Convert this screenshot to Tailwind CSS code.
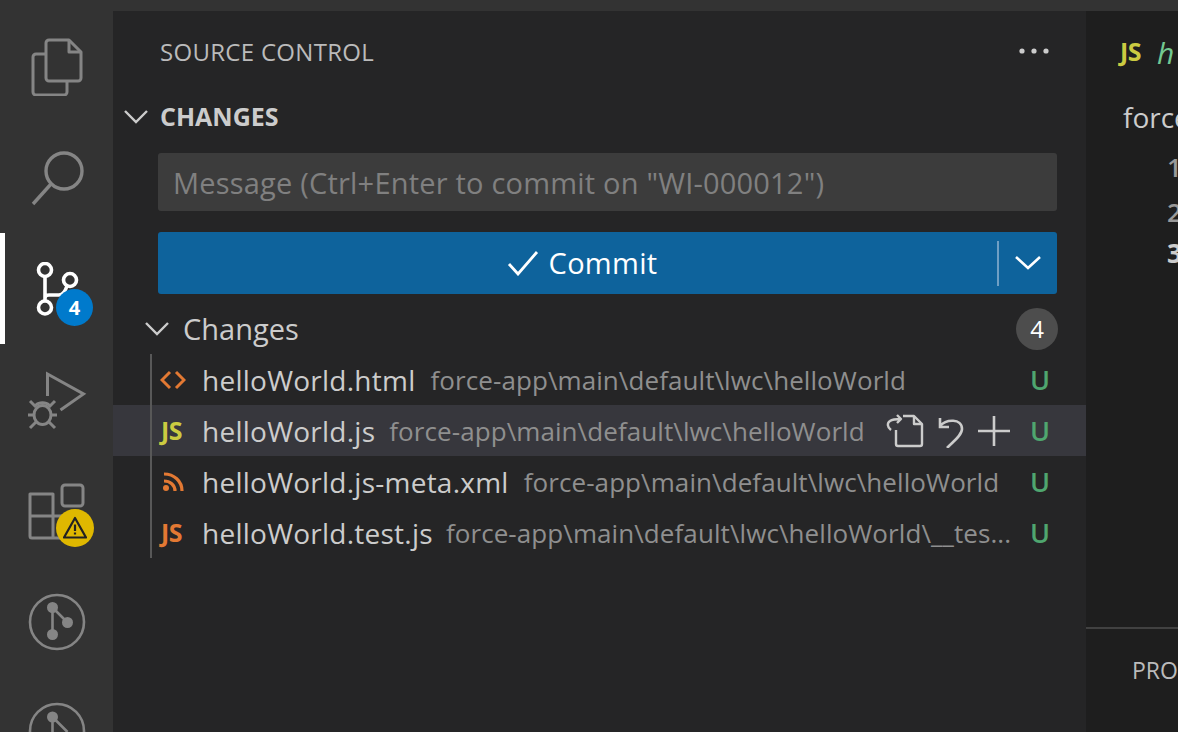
<!doctype html>
<html>
  <head>
    <meta charset="UTF-8" />
    <script src="https://cdn.jsdelivr.net/npm/@tailwindcss/browser@4"></script>
  </head>
  <body class="w-[1178px] h-[732px] overflow-hidden bg-[#333333] font-['Open_Sans',sans-serif]">
    <div class="h-[11px] bg-[#333333]"></div>
    <div class="flex h-[721px]">

      <!-- activity bar -->
      <div class="w-[113px] shrink-0 bg-[#333333] overflow-hidden flex flex-col">
        <div class="h-[111px] shrink-0 flex items-center justify-center">
          <svg class="w-[52px] h-[58px]" viewBox="0 0 52 58" fill="none" stroke="#858585" stroke-width="3" stroke-linejoin="round">
            <path d="M18 2h20l12 12v26a3 3 0 0 1-3 3H18a3 3 0 0 1-3-3V5a3 3 0 0 1 3-3z" />
            <path d="M38 2v12h12" />
            <path d="M15 16H5a3 3 0 0 0-3 3v35a3 3 0 0 0 3 3h28a3 3 0 0 0 3-3V43" />
          </svg>
        </div>
        <div class="h-[111px] shrink-0 flex items-center justify-center">
          <svg class="w-[56px] h-[58px]" viewBox="0 0 56 58" fill="none" stroke="#858585" stroke-width="3.4">
            <circle cx="35" cy="22" r="18" />
            <path d="M22 35L4 55" />
          </svg>
        </div>
        <div class="h-[111px] shrink-0 flex items-center justify-center border-l-[5px] border-white pr-[5px] relative">
          <svg class="w-[44px] h-[54px]" viewBox="0 0 44 54" fill="none" stroke="#ffffff" stroke-width="3.6">
            <circle cx="10" cy="8" r="6.5" />
            <circle cx="10" cy="45.5" r="6.5" />
            <circle cx="35" cy="18" r="6.5" />
            <path d="M10 14.500v24.500M10 36c0-2 2-3 4-3h10c3 0 6-3 8-9" />
          </svg>
          <span class="absolute left-[51px] top-[56px] w-[37px] h-[37px] rounded-full bg-[#007acc] text-white text-[20px] font-bold flex items-center justify-center">4</span>
        </div>
        <div class="h-[111px] shrink-0 flex items-center justify-center">
          <svg class="w-[60px] h-[60px]" viewBox="0 0 60 60" fill="none" stroke="#858585" stroke-width="3" stroke-linejoin="miter">
            <path d="M20.500 26V4L56.500 24L33.500 40" />
            <ellipse cx="15.500" cy="45" rx="8.500" ry="9.500" />
            <path d="M9 35c3-3 10-3 13 0M3 31l6 6M28 31l-6 6M1 45h6M24 45h6M3 58l6-6M28 58l-6-6" />
          </svg>
        </div>
        <div class="h-[111px] shrink-0 flex items-center justify-center relative">
          <svg class="w-[60px] h-[60px] mt-[2px]" viewBox="0 0 60 60" fill="none" stroke="#858585" stroke-width="3" stroke-linejoin="round">
            <rect x="35" y="3" width="21" height="21" rx="3" />
            <path d="M3 12h23v22h22v20a2 2 0 0 1-2 2H5a2 2 0 0 1-2-2zM3 34h23v22" />
          </svg>
          <span class="absolute left-[56px] top-[54px] w-[38px] h-[38px] rounded-full bg-[#dfb800] flex items-center justify-center">
            <svg class="w-[24px] h-[23px] -mt-[1px]" viewBox="0 0 24 23" fill="none" stroke="#222222" stroke-width="2.2" stroke-linejoin="round">
              <path d="M12 2L23 21.500H1z" />
              <path d="M12 8.500v6.500M12 16.500v2" />
            </svg>
          </span>
        </div>
        <div class="h-[111px] shrink-0 flex items-center justify-center">
          <svg class="w-[58px] h-[58px]" viewBox="0 0 58 58" fill="none" stroke="#858585" stroke-width="2.6">
            <circle cx="29" cy="29" r="27" />
            <path d="M24.500 14.500v27M24.500 14.500l15 15" />
            <circle cx="24.500" cy="14.500" r="5.500" fill="#858585" stroke="none" />
            <circle cx="24.500" cy="41.500" r="5.500" fill="#858585" stroke="none" />
            <circle cx="39.500" cy="29.500" r="5.500" fill="#858585" stroke="none" />
          </svg>
        </div>
        <div class="shrink-0 flex justify-center mt-[25px]">
          <svg class="w-[58px] h-[58px] shrink-0" viewBox="0 0 58 58" fill="none" stroke="#858585" stroke-width="2.6">
            <circle cx="29" cy="29" r="27" />
            <path d="M24.500 15v27M24.500 15l15 15" />
            <circle cx="24.500" cy="15" r="5.500" fill="#858585" stroke="none" />
          </svg>
        </div>
      </div>

      <!-- sidebar -->
      <div class="w-[973px] shrink-0 bg-[#252526] text-[#cccccc] flex flex-col">
        <div class="h-[82px] flex items-center justify-between pl-[47px] pr-[37px]">
          <span class="text-[24px] text-[#bbbbbb] tracking-[0.3px]">SOURCE CONTROL</span>
          <svg class="w-[30px] h-[6px] -mt-[2px]" viewBox="0 0 30 6" fill="#cccccc">
            <circle cx="3" cy="3" r="2.6" />
            <circle cx="15" cy="3" r="2.6" />
            <circle cx="27" cy="3" r="2.6" />
          </svg>
        </div>
        <div class="h-[48px] flex items-center pl-[11px]">
          <svg class="w-[24px] h-[14px]" viewBox="0 0 24 14" fill="none" stroke="#cccccc" stroke-width="2.4"><path d="M1 1l11 11L23 1" /></svg>
          <span class="ml-[12px] text-[25px] font-bold">CHANGES</span>
        </div>

        <div class="mx-[45px] w-[899px] h-[58px] mt-[12px] pt-[2px] bg-[#3c3c3c] rounded-[3px] flex items-center pl-[15px] text-[29px] text-[#808080] tracking-[0.2px] whitespace-nowrap">Message (Ctrl+Enter to commit on "WI-000012")</div>

        <div class="mx-[45px] w-[899px] h-[62px] mt-[21px] bg-[#0e639c] rounded-[3px] flex items-center text-white">
          <div class="flex-1 pl-[9px] flex items-center justify-center gap-[10px] text-[29px] tracking-[0.3px]">
            <svg class="w-[32px] h-[26px]" viewBox="0 0 32 26" fill="none" stroke="#ffffff" stroke-width="2.8"><path d="M2 14l9 10L30 2" /></svg>
            <span>Commit</span>
          </div>
          <div class="w-[2px] h-[45px] bg-[#6f9fc4]"></div>
          <div class="w-[58px] flex justify-center">
            <svg class="w-[26px] h-[14px]" viewBox="0 0 26 14" fill="none" stroke="#ffffff" stroke-width="2.6"><path d="M1 1l12 11L25 1" /></svg>
          </div>
        </div>

        <div class="h-[60px] pt-[10px] flex items-center pl-[32px] pr-[28px]">
          <svg class="w-[24px] h-[14px]" viewBox="0 0 24 14" fill="none" stroke="#cccccc" stroke-width="2.4"><path d="M1 1l11 11L23 1" /></svg>
          <span class="ml-[14px] flex-1 text-[29px]">Changes</span>
          <span class="w-[42px] h-[42px] rounded-full bg-[#4d4d4d] text-white text-[24px] flex items-center justify-center">4</span>
        </div>

        <div class="relative">
          <div class="absolute left-[37px] top-0 bottom-0 w-[2px] bg-[#585858]"></div>

          <div class="h-[51px] pt-[1px] flex items-center pl-[47px] pr-[36px]">
            <svg class="w-[26px] h-[20px] mr-[16px] shrink-0" viewBox="0 0 26 20" fill="none" stroke="#e37933" stroke-width="3"><path d="M10 2L2 10l8 8M16 2l8 8-8 8" /></svg>
            <span class="text-[28px] text-[#cccccc] tracking-[0.25px]">helloWorld.html</span>
            <span class="ml-[15px] flex-1 text-[26px] text-[#8f8f8f] tracking-[0.08px] whitespace-nowrap">force-app\main\default\lwc\helloWorld</span>
            <span class="text-[27px] font-semibold text-[#4fa66f]">U</span>
          </div>

          <div class="h-[51px] pt-[1px] flex items-center pl-[48px] pr-[36px] bg-[#37373d]">
            <span class="w-[25px] mr-[16px] shrink-0 text-[25px] font-bold text-[#cbcb41] tracking-[-0.5px]">JS</span>
            <span class="text-[28px] text-[#cccccc] tracking-[0.25px]">helloWorld.js</span>
            <span class="ml-[14px] flex-1 text-[26px] text-[#8f8f8f] tracking-[0.08px] whitespace-nowrap">force-app\main\default\lwc\helloWorld</span>
            <div class="flex items-center gap-[14px] mr-[20px]">
              <svg class="w-[38px] h-[34px]" viewBox="0 0 38 34" fill="none" stroke="#cccccc" stroke-width="2.4" stroke-linejoin="round">
                <path d="M10 16v14a2 2 0 0 0 2 2h22a2 2 0 0 0 2-2V10l-8-8H17" />
                <path d="M28 2v8h8" />
                <path d="M5 16c-4-3-4-7-1-9 2-1.500 5-2 11-2M11 1l4 4-4 4" />
              </svg>
              <svg class="w-[26px] h-[34px]" viewBox="0 0 26 34" fill="none" stroke="#cccccc" stroke-width="2.6">
                <path d="M2 4v9h9M2 12c6-7 22-8 22 3 0 6-8 12-15 19" />
              </svg>
              <svg class="w-[32px] h-[32px]" viewBox="0 0 32 32" fill="none" stroke="#cccccc" stroke-width="2.6"><path d="M16 1v30M0 16h32" /></svg>
            </div>
            <span class="text-[27px] font-semibold text-[#4fa66f]">U</span>
          </div>

          <div class="h-[51px] pt-[1px] flex items-center pl-[47px] pr-[36px]">
            <svg class="w-[26px] h-[20px] mr-[16px] shrink-0" viewBox="0 0 26 20" fill="none" stroke="#e37933" stroke-width="3.2">
              <path d="M4 2c10 0 18 7 18 17M4 9c6 0 11 4 11 10" />
              <circle cx="6" cy="16" r="3" fill="#e37933" stroke="none" />
            </svg>
            <span class="text-[28px] text-[#cccccc] tracking-[0.25px]">helloWorld.js-meta.xml</span>
            <span class="ml-[15px] flex-1 text-[26px] text-[#8f8f8f] tracking-[0.08px] whitespace-nowrap">force-app\main\default\lwc\helloWorld</span>
            <span class="text-[27px] font-semibold text-[#4fa66f]">U</span>
          </div>

          <div class="h-[51px] pt-[1px] flex items-center pl-[48px] pr-[36px]">
            <span class="w-[25px] mr-[16px] shrink-0 text-[25px] font-bold text-[#e37933] tracking-[-0.5px]">JS</span>
            <span class="text-[28px] text-[#cccccc] tracking-[0.25px] whitespace-nowrap">helloWorld.test.js</span>
            <span class="ml-[13px] flex-1 text-[26px] text-[#8f8f8f] tracking-[0.08px] whitespace-nowrap">force-app\main\default\lwc\helloWorld\__tes...</span>
            <span class="text-[27px] font-semibold text-[#4fa66f]">U</span>
          </div>
        </div>
      </div>

      <!-- editor -->
      <div class="flex-1 bg-[#1e1e1e] overflow-hidden flex flex-col whitespace-nowrap">
        <div class="h-[82px] flex items-center pl-[34px] gap-[16px]">
          <span class="text-[25px] font-bold text-[#cbcb41] tracking-[-0.5px]">JS</span>
          <span class="text-[30px] italic text-[#73c991]">h</span>
        </div>
        <div class="pl-[37px] text-[28px] text-[#cccccc] h-[48px] flex items-center">force-app</div>
        <div class="pl-[81px] pt-[4px] text-[26px] font-semibold text-[#999999] h-[48px] flex items-center">1</div>
        <div class="pl-[81px] pt-[2px] text-[26px] font-semibold text-[#999999] h-[45px] flex items-center">2</div>
        <div class="pl-[81px] text-[26px] font-bold text-[#cccccc] h-[38px] flex items-center">3</div>
        <div class="flex-1"></div>
        <div class="h-[105px] border-t-[2px] border-[#414141] pl-[46px] pt-[24px] text-[23px] text-[#bbbbbb]">PROBLEMS</div>
      </div>
    </div>
  </body>
</html>
